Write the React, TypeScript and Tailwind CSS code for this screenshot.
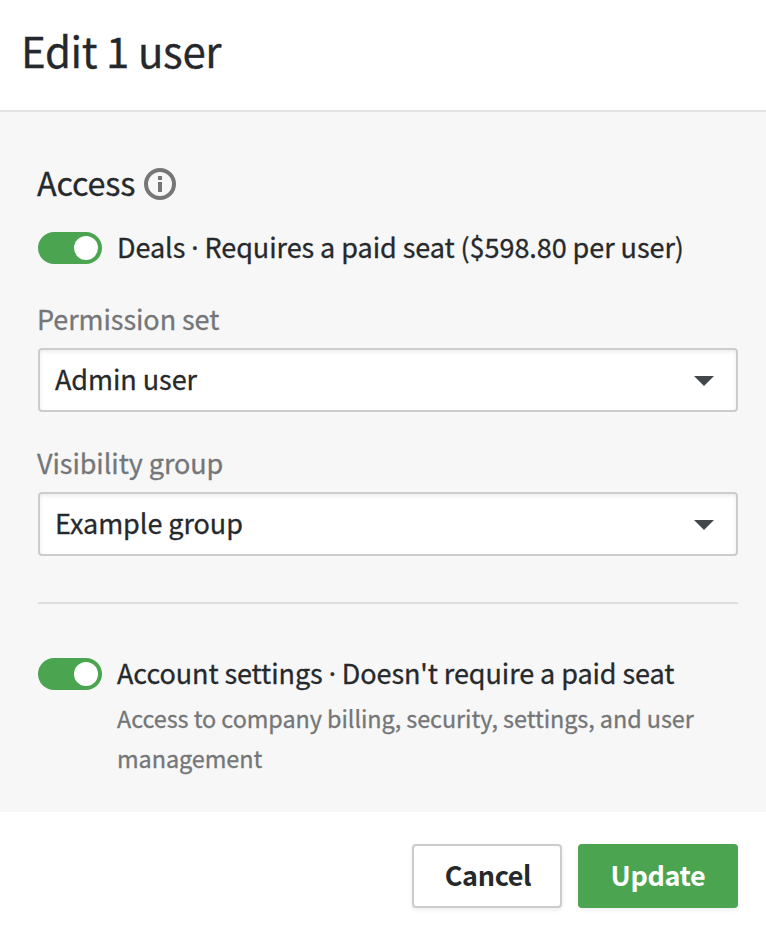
import { useState } from "react";

function InfoIcon() {
  return (
    <svg width="32" height="32" viewBox="0 0 32 32" fill="none" className="ml-2 shrink-0">
      <circle cx="16" cy="16" r="14" stroke="#747678" strokeWidth="4" />
      <path d="M14 8h4v4h-4zM14 14h4v10h-4z" fill="#747678" />
    </svg>
  );
}

function Toggle({ checked, onChange }: { checked: boolean; onChange: (value: boolean) => void }) {
  return (
    <button
      role="switch"
      aria-checked={checked}
      onClick={() => onChange(!checked)}
      className={`flex h-8 w-16 shrink-0 items-center rounded-full p-1 ${
        checked ? "justify-end bg-[#4ba550]" : "justify-start bg-[#b9babb]"
      }`}
    >
      <span className="size-6 rounded-full bg-white" />
    </button>
  );
}

// The CJK font has a full-width middle dot, so take a narrow one
function Dot() {
  return <span className="font-['Noto_Sans',sans-serif] leading-none">·</span>;
}

function SelectField({ label, value, className }: { label: string; value: string; className: string }) {
  return (
    <div className={className}>
      <div className="-ml-px text-[27px] leading-[30px] tracking-[-0.07px] text-[#747678]">{label}</div>
      <button className="mt-[14px] flex h-16 w-full justify-between rounded-[4px] border-2 border-[#cbcccd] bg-white pr-[22px] pl-[15px] text-left shadow-[inset_0_2px_4px_rgba(38,41,44,0.08)]">
        <span className="text-[27px] leading-[58px] tracking-[-0.06px]">{value}</span>
        <svg width="20" height="10" viewBox="0 0 20 10" className="mt-[26px]">
          <path d="M0 0h20L10 10z" fill="#43464a" />
        </svg>
      </button>
    </div>
  );
}

export default function App() {
  const [deals, setDeals] = useState(true);
  const [account, setAccount] = useState(true);

  return (
    <div className="h-[932px] w-[766px] overflow-hidden bg-white font-['Noto_Sans_CJK_SC',sans-serif] text-[#26292c] [-webkit-text-stroke:0.3px]">
      {/* Header */}
      <header className="h-28 border-b-2 border-[#e2e2e3] pl-[21px]">
        <h1 className="text-[42px] leading-[100px] tracking-[-0.4px]">Edit 1 user</h1>
      </header>

      {/* Access settings */}
      <main className="h-[700px] bg-[#f7f7f7] pt-14 pr-7 pl-[38px]">
        <div className="flex h-8">
          <h2 className="-ml-px w-[99px] text-[32.4px] leading-7 tracking-[-0.2px] whitespace-nowrap">Access</h2>
          <InfoIcon />
        </div>

        <div className="mt-8 flex h-8">
          <Toggle checked={deals} onChange={setDeals} />
          <span className="ml-[15px] text-[27px] leading-[30px] tracking-[-0.06px] whitespace-nowrap">
            Deals <Dot /> Requires a paid seat ($598.80 per user)
          </span>
        </div>

        <SelectField label="Permission set" value="Admin user" className="mt-10" />
        <SelectField label="Visibility group" value="Example group" className="mt-9" />

        <hr className="mt-[46px] border-t-2 border-[#dcddde]" />

        <div className="mt-[54px] flex">
          <Toggle checked={account} onChange={setAccount} />
          <div className="ml-[15px]">
            <div className="h-[30px] text-[27px] leading-[30px] tracking-[-0.08px] whitespace-nowrap">
              Account settings <Dot /> Doesn't require a paid seat
            </div>
            <p className="mt-[10px] text-[23.4px] leading-10 tracking-[-0.06px] text-[#747678]">
              Access to company billing, security, settings, and user management
            </p>
          </div>
        </div>
      </main>

      {/* Actions */}
      <footer className="flex justify-end gap-4 pt-8 pr-7">
        <button className="h-16 w-[150px] rounded-[4px] border-2 border-[#cbcccd] bg-white pb-0.5 pl-0.5 text-[27px] leading-[58px] font-bold tracking-[-0.35px] shadow-[0_2px_4px_rgba(38,41,44,0.08)] [-webkit-text-stroke:0px]">
          Cancel
        </button>
        <button className="h-16 w-40 rounded-[4px] bg-[#4ba550] pb-0.5 text-[27px] leading-[62px] font-bold tracking-[-0.35px] text-white shadow-[0_2px_4px_rgba(38,41,44,0.08)] [-webkit-text-stroke:0px]">
          Update
        </button>
      </footer>
    </div>
  );
}
